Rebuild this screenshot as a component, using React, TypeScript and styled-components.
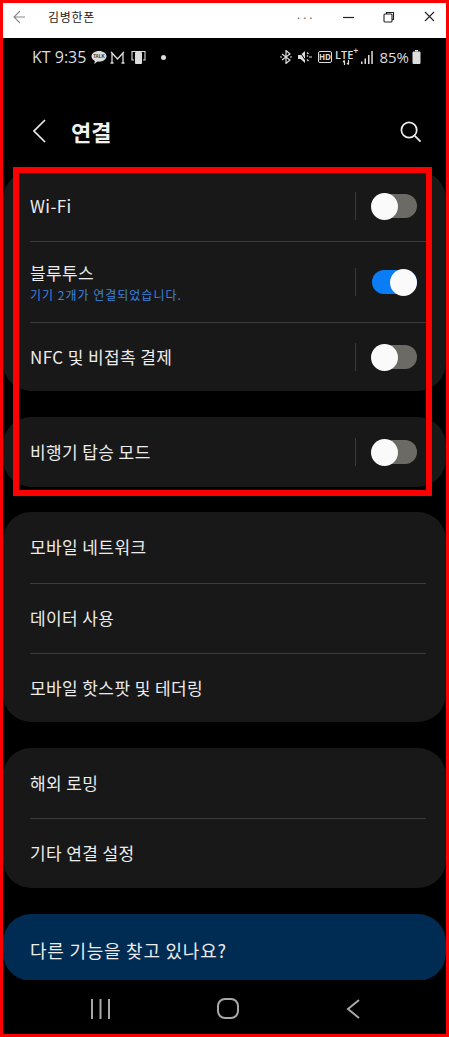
import styled, { createGlobalStyle } from 'styled-components'

const GlobalStyle = createGlobalStyle`
  html, body {
    margin: 0;
    padding: 0;
    background: #000;
  }
  * {
    box-sizing: border-box;
  }
`

const Toggle = ({ on }: { on?: boolean }) => (
  <Div_ToggleCell>
    <Div_Track on={on}>
      <Div_Knob on={on} />
    </Div_Track>
  </Div_ToggleCell>
)

export default function App() {
  return (
    <>
      <GlobalStyle />
      <Div_Frame>
        <Header_Window>
          <Div_WindowLeft>
            <svg width="12" height="14" viewBox="0 0 12 14" fill="none" stroke="#8a8a8a" strokeWidth="1.1">
              <path d="M12 7H1M7 1 1 7l6 6" />
            </svg>
            <Span_WindowTitle>김병한폰</Span_WindowTitle>
          </Div_WindowLeft>
          <Div_WindowRight>
            <Span_Dots>···</Span_Dots>
            <svg width="11" height="12" viewBox="0 0 11 12" stroke="#222" fill="none">
              <path d="M0 6.500h11" strokeWidth="1.200" />
            </svg>
            <svg width="12" height="12" viewBox="0 0 12 12" stroke="#222" fill="none" strokeWidth="1.100">
              <rect x="1" y="3" width="8" height="8" rx="1" />
              <path d="M3.500 3V1.500h7V8.500H9" />
            </svg>
            <svg width="11" height="11" viewBox="0 0 11 11" stroke="#222" fill="none" strokeWidth="1.100">
              <path d="M1 1l9 9M10 1l-9 9" />
            </svg>
          </Div_WindowRight>
        </Header_Window>

        <Div_Phone>
          <Div_StatusBar>
            <Div_StatusGroup>
              <Span_Clock>KT 9:35</Span_Clock>
              <svg width="16" height="15" viewBox="0 0 16 15">
                <path d="M8 1C3.900 1 .5 3.300 .5 6.300c0 2 1.400 3.700 3.400 4.600l-.7 3 3.300-2.300c.5.100 1 .1 1.500.1 4.200 0 7.500-2.400 7.500-5.400S12.200 1 8 1z" fill="#ddd" />
                <text x="8" y="8" textAnchor="middle" fontSize="4.500" fontWeight="700" fontFamily="Liberation Sans" fill="#333">TALK</text>
              </svg>
              <svg width="15" height="13" viewBox="0 0 15 13" fill="none" stroke="#ddd" strokeWidth="1.300">
                <path d="M2 12V2l5.500 6L13 2v10M2 2 1 1M13 2l1-1M.5 12h3M11.500 12h3" />
              </svg>
              <Span_IconGap />
              <svg width="15" height="15" viewBox="0 0 15 15" fill="none" stroke="#ddd" strokeWidth="1.100">
                <path d="M1 8V1.500h13V8" />
                <rect x="4" y="2" width="7" height="12" rx="1" fill="#ddd" stroke="none" />
                <path d="M1 8v2h2M14 8v2h-2" />
              </svg>
              <I_Dot />
            </Div_StatusGroup>
            <Div_StatusGroup>
              <svg width="12" height="14" viewBox="0 0 12 14" fill="none" stroke="#ddd" strokeWidth="1.200">
                <path d="M2 4l8 6-4 3.500V.5L10 4l-8 6" />
                <path d="M0 7h2M10 7h2" />
              </svg>
              <Span_IconGap />
              <svg width="14" height="14" viewBox="0 0 14 14" fill="#ddd">
                <path d="M0 5h2.500L7 1v12L2.500 9H0z" />
                <path d="M1 1l8 11.500" stroke="#000" strokeWidth="1" />
                <path d="M9 2.500l1.500 1.500M9 5.500l1 1M11 7h3M9 9.500l1.500 1.500" stroke="#ddd" strokeWidth="1.200" fill="none" />
              </svg>
              <Span_IconGap />
              <Span_Hd>HD</Span_Hd>
              <Div_Lte>
                <span>LTE<sup>+</sup></span>
                <svg width="10" height="5" viewBox="0 0 10 5" stroke="#ddd" fill="none" strokeWidth="1.200">
                  <path d="M2.500 5V.5M1 2l1.500-1.500M6.500 0v4.500M5 3l1.500 1.500" />
                </svg>
              </Div_Lte>
              <svg width="12" height="13" viewBox="0 0 12 13" fill="#ddd">
                <rect x="0" y="10.500" width="1.500" height="2.500" />
                <rect x="3.500" y="7.500" width="1.500" height="5.500" />
                <rect x="7" y="4" width="1.500" height="9" />
                <rect x="10.300" y="0" width="1.500" height="13" />
              </svg>
              <Span_Battery>85%</Span_Battery>
              <svg width="9" height="14" viewBox="0 0 9 14" fill="#ddd">
                <path d="M3 0h3v1.500H3z" />
                <rect x="0.500" y="1.500" width="8" height="12.500" rx="1" />
              </svg>
            </Div_StatusGroup>
          </Div_StatusBar>

          <Header_Page>
            <Div_TitleGroup>
              <svg width="13" height="24" viewBox="0 0 13 24" fill="none" stroke="#eee" strokeWidth="1.600">
                <path d="M12 1 1 12l11 11" />
              </svg>
              <H1_Title>연결</H1_Title>
            </Div_TitleGroup>
            <svg width="23" height="23" viewBox="0 0 24 24" fill="none" stroke="#eee" strokeWidth="1.800">
              <circle cx="10.500" cy="10.500" r="8" />
              <path d="M16.500 16.500l6 6" />
            </svg>
          </Header_Page>

          <Main_List>
            <Section_Card>
              <Div_Row height={70}>
                <Span_Label>Wi-Fi</Span_Label>
                <Toggle />
              </Div_Row>
              <Div_Row height={81}>
                <Div_LabelStack>
                  <Span_Label>블루투스</Span_Label>
                  <Span_Sub>기기 2개가 연결되었습니다.</Span_Sub>
                </Div_LabelStack>
                <Toggle on />
              </Div_Row>
              <Div_Row height={69}>
                <Span_Label>NFC 및 비접촉 결제</Span_Label>
                <Toggle />
              </Div_Row>
            </Section_Card>

            <Section_Card>
              <Div_Row height={70}>
                <Span_Label>비행기 탑승 모드</Span_Label>
                <Toggle />
              </Div_Row>
            </Section_Card>

            <Section_Card>
              <Div_Row height={71}>
                <Span_Label>모바일 네트워크</Span_Label>
              </Div_Row>
              <Div_Row height={70}>
                <Span_Label>데이터 사용</Span_Label>
              </Div_Row>
              <Div_Row height={69}>
                <Span_Label>모바일 핫스팟 및 테더링</Span_Label>
              </Div_Row>
            </Section_Card>

            <Section_Card>
              <Div_Row height={70}>
                <Span_Label>해외 로밍</Span_Label>
              </Div_Row>
              <Div_Row height={70}>
                <Span_Label>기타 연결 설정</Span_Label>
              </Div_Row>
            </Section_Card>

            <Section_Banner>
              <Span_BannerText>다른 기능을 찾고 있나요?</Span_BannerText>
            </Section_Banner>
          </Main_List>

          <Nav_Bottom>
            <svg width="19" height="20" viewBox="0 0 19 20" fill="none" stroke="#a8a8a8" strokeWidth="2">
              <path d="M1 0v20M9.500 0v20M18 0v20" />
            </svg>
            <svg width="22" height="21" viewBox="0 0 22 21" fill="none" stroke="#a8a8a8" strokeWidth="2">
              <rect x="1" y="1" width="20" height="19" rx="7" />
            </svg>
            <svg width="14" height="20" viewBox="0 0 14 20" fill="none" stroke="#a8a8a8" strokeWidth="2">
              <path d="M13 1 2 10l11 9" />
            </svg>
          </Nav_Bottom>
        </Div_Phone>

        <Div_Highlight />
      </Div_Frame>
    </>
  )
}

const Div_Frame = styled.div`
  position: relative;
  width: 449px;
  height: 1037px;
  border: 3px solid #ff0000;
  background: #000;
  overflow: hidden;
  font-family: 'Noto Sans CJK KR', 'Noto Sans', sans-serif;
`
const Header_Window = styled.header`
  height: 35px;
  background: #fff;
  display: flex;
  justify-content: space-between;
  align-items: center;
  padding: 0 11px 8px 10px;
`
const Div_WindowLeft = styled.div`
  display: flex;
  align-items: center;
  gap: 23px;
`
const Span_WindowTitle = styled.span`
  font-size: 12px;
  letter-spacing: 0.7px;
  color: #222;
`
const Div_WindowRight = styled.div`
  display: flex;
  align-items: center;
  gap: 29px;
`
const Span_Dots = styled.span`
  font-size: 11px;
  color: #555;
  letter-spacing: 0;
`
const Div_Phone = styled.div`
  height: 996px;
  display: flex;
  flex-direction: column;
`
const Div_StatusBar = styled.div`
  height: 40px;
  display: flex;
  justify-content: space-between;
  align-items: center;
  padding: 0 25px 2px 29px;
  flex-shrink: 0;
`
const Div_StatusGroup = styled.div`
  display: flex;
  align-items: center;
  gap: 3px;
`
const Span_IconGap = styled.span`
  width: 0;
`
const Span_Clock = styled.span`
  font-family: 'Open Sans', sans-serif;
  font-size: 16px;
  color: #ddd;
  margin-right: 2px;
`
const Span_Battery = styled.span`
  font-family: 'Open Sans', sans-serif;
  font-size: 15px;
  color: #ddd;
  margin: 0 0 0 3px;
`
const I_Dot = styled.i`
  width: 5px;
  height: 5px;
  border-radius: 50%;
  background: #ddd;
  margin-left: 12px;
`
const Span_Hd = styled.span`
  font-family: 'Open Sans', sans-serif;
  font-size: 8px;
  font-weight: 700;
  color: #ddd;
  border: 1px solid #ddd;
  border-radius: 2px;
  padding: 0;
  line-height: 10px;
`
const Div_Lte = styled.div`
  display: flex;
  flex-direction: column;
  align-items: center;
  font-family: 'Open Sans', sans-serif;
  font-size: 11px;
  font-weight: 600;
  line-height: 10px;
  color: #ddd;

  sup {
    font-size: 9px;
    line-height: 0;
  }
`
const Header_Page = styled.header`
  height: 90px;
  display: flex;
  justify-content: space-between;
  align-items: center;
  padding: 16px 24px 0 30px;
  flex-shrink: 0;
`
const Div_TitleGroup = styled.div`
  display: flex;
  align-items: center;
  gap: 25px;
`
const H1_Title = styled.h1`
  margin: 0;
  font-size: 22px;
  font-weight: 700;
  color: #f0f0f0;
`
const Main_List = styled.main`
  flex: 1;
  min-height: 0;
  overflow: hidden;
  display: flex;
  flex-direction: column;
  gap: 26px;
  padding-top: 3px;
`
const Section_Card = styled.section`
  background: #181818;
  border-radius: 28px;
  flex-shrink: 0;

  &:nth-of-type(3) {
    margin-top: -1px;
  }
`
const Div_Row = styled.div<{ height: number }>`
  height: ${props => props.height}px;
  margin: 0 20px 0 27px;
  display: flex;
  justify-content: space-between;
  align-items: center;
  border-top: 1px solid #3a3a3a;

  &:first-child {
    border-top: none;
  }
`
const Div_LabelStack = styled.div`
  display: flex;
  flex-direction: column;
  gap: 2px;
`
const Span_Label = styled.span`
  font-size: 17px;
  line-height: 24px;
  letter-spacing: 0.4px;
  color: #ececec;
  margin-top: -1px;
`
const Span_Sub = styled.span`
  font-size: 12px;
  line-height: 16px;
  letter-spacing: 1px;
  color: #3d83dc;
`
const Div_ToggleCell = styled.div`
  height: 28px;
  display: flex;
  align-items: center;
  padding: 0 9px 0 16px;
  border-left: 1px solid #3a3a3a;
`
const Div_Track = styled.div<{ on?: boolean }>`
  position: relative;
  width: 45px;
  height: 24px;
  border-radius: 12px;
  background: ${props => (props.on ? '#0a7cf5' : '#6b6a64')};
`
const Div_Knob = styled.div<{ on?: boolean }>`
  position: absolute;
  top: -1.500px;
  left: ${props => (props.on ? '18px' : '-1px')};
  width: 27px;
  height: 27px;
  border-radius: 50%;
  background: #fafafa;
`
const Section_Banner = styled.section`
  flex-shrink: 0;
  height: 67px;
  background: #002b52;
  border-radius: 28px;
  padding: 24px 27px 0;
`
const Span_BannerText = styled.span`
  font-size: 18px;
  line-height: 24px;
  letter-spacing: 0.750px;
  color: #ececec;
`
const Nav_Bottom = styled.nav`
  height: 54px;
  flex-shrink: 0;
  display: flex;
  justify-content: space-between;
  align-items: center;
  padding: 3px 86px 0 88px;
`
const Div_Highlight = styled.div`
  position: absolute;
  left: 10px;
  top: 164px;
  width: 419px;
  height: 329px;
  border: 6px solid #ff0000;
  pointer-events: none;
`
